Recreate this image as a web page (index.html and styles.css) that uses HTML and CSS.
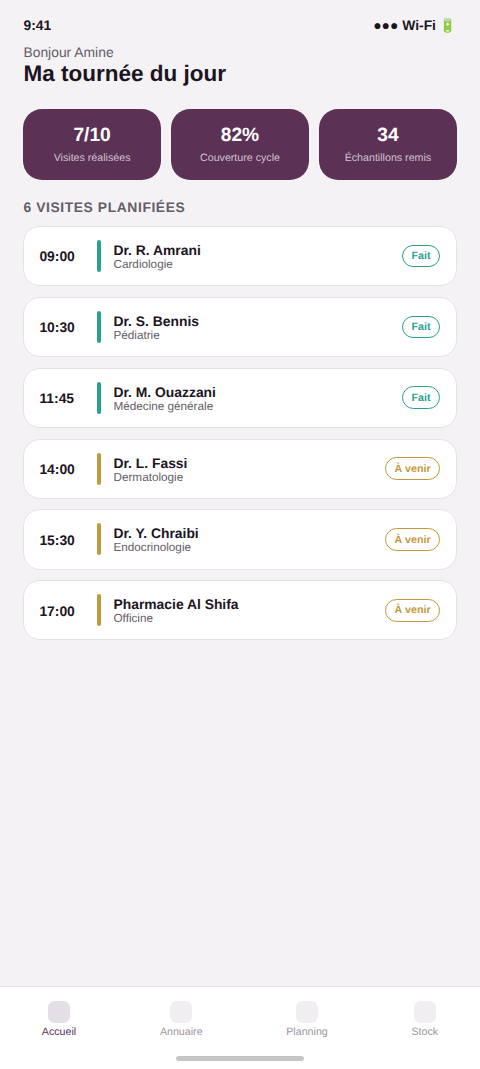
FILE: index.html
```html
<!DOCTYPE html>
<html lang="fr">
<head>
<meta charset="utf-8">
<title>Ma tournée du jour</title>
<link rel="stylesheet" href="styles.css">
</head>
<body>
<div class="screen">
  <div class="status"><span>9:41</span><span>●●● Wi-Fi 🔋</span></div>
  <header class="header">
    <div class="greeting">Bonjour Amine</div>
    <h1 class="title">Ma tournée du jour</h1>
  </header>
  <main class="content">
    <section class="stats">
      <div class="stat"><div class="stat-value">7/10</div><div class="stat-label">Visites réalisées</div></div>
      <div class="stat"><div class="stat-value">82%</div><div class="stat-label">Couverture cycle</div></div>
      <div class="stat"><div class="stat-value">34</div><div class="stat-label">Échantillons remis</div></div>
    </section>
    <h2 class="section-title">6 VISITES PLANIFIÉES</h2>
    <section class="visits">
      <article class="visit done"><time class="time">09:00</time><i class="bar"></i><div class="info"><div class="name">Dr. R. Amrani</div><div class="role">Cardiologie</div></div><span class="pill">Fait</span></article>
      <article class="visit done"><time class="time">10:30</time><i class="bar"></i><div class="info"><div class="name">Dr. S. Bennis</div><div class="role">Pédiatrie</div></div><span class="pill">Fait</span></article>
      <article class="visit done"><time class="time">11:45</time><i class="bar"></i><div class="info"><div class="name">Dr. M. Ouazzani</div><div class="role">Médecine générale</div></div><span class="pill">Fait</span></article>
      <article class="visit next"><time class="time">14:00</time><i class="bar"></i><div class="info"><div class="name">Dr. L. Fassi</div><div class="role">Dermatologie</div></div><span class="pill">À venir</span></article>
      <article class="visit next"><time class="time">15:30</time><i class="bar"></i><div class="info"><div class="name">Dr. Y. Chraibi</div><div class="role">Endocrinologie</div></div><span class="pill">À venir</span></article>
      <article class="visit next"><time class="time">17:00</time><i class="bar"></i><div class="info"><div class="name">Pharmacie Al Shifa</div><div class="role">Officine</div></div><span class="pill">À venir</span></article>
    </section>
  </main>
  <nav class="tabs">
    <div class="tab active"><i class="tab-icon"></i><span>Accueil</span></div>
    <div class="tab"><i class="tab-icon"></i><span>Annuaire</span></div>
    <div class="tab"><i class="tab-icon"></i><span>Planning</span></div>
    <div class="tab"><i class="tab-icon"></i><span>Stock</span></div>
    <div class="home"></div>
  </nav>
</div>
</body>
</html>
```
FILE: styles.css
```css
* { box-sizing: border-box; margin: 0; }
/* 1rem = 10 units of a 450-unit wide layout */
html { font-size: 10.6667px; }
body { background: #f5f2f6; color: #1c151f; font-family: "Liberation Sans", Arial, sans-serif; text-rendering: geometricPrecision; }
.screen { height: 1069px; display: flex; flex-direction: column; overflow: hidden; }
.status { display: flex; justify-content: space-between; padding: 17px 2.15rem 0 2.2rem; height: 44px; font-size: 1.3rem; line-height: 16px; font-weight: 700; }
.header { padding: 0 2.2rem; }
.greeting { font-size: 1.3rem; line-height: 16px; color: #645d67; }
.title { padding-top: 1px; font-size: 22.5px; line-height: 26px; }
.content { flex: 1; padding: 22.4px 2.2rem 0; }
.stats { display: grid; grid-template-columns: repeat(3, 1fr); gap: 1rem; }
.stat { height: 70.6px; padding-top: 16px; border-radius: 1.8rem; background: #5b3156; color: #fff; text-align: center; }
.stat-value { font-size: 1.8rem; line-height: 22px; font-weight: 700; }
.stat-label { margin-top: 5px; font-size: 1rem; line-height: 12px; color: #d0c2ce; }
.section-title { margin-top: 19.4px; font-size: 1.3rem; line-height: 16px; letter-spacing: 0.055rem; color: #645d67; }
.visits { display: grid; gap: 10.67px; margin-top: 10.6px; }
.visit { height: 60.2px; display: flex; align-items: center; padding: 0 1.45rem 0 1.4rem; border: 1px solid #e6e1e8; border-radius: 1.6rem; background: #fff; }
.time { width: 4.2rem; margin-right: 1.2rem; padding-top: 0.5px; font-size: 1.3rem; font-weight: 700; }
.bar { width: 0.35rem; height: 3rem; margin-right: 1.2rem; border-radius: 2px; background: currentColor; }
.info { flex: 1; padding-top: 1px; }
.name { font-size: 1.3rem; line-height: 15px; font-weight: 700; }
.role { margin: 0 0 -1px; font-size: 1.1rem; line-height: 13px; color: #645d67; }
.pill { height: 22.8px; padding: 4.6px 0.8rem 0; border: 1.2px solid; border-radius: 12px; font-size: 1rem; line-height: 12px; font-weight: 700; }
.done .bar, .done .pill { color: #2aa093; }
.next .bar, .next .pill { color: #c4983c; }
.tabs { position: relative; height: 83.5px; display: flex; justify-content: space-around; padding-top: 14.5px; border-top: 1px solid #e6e1e8; background: #fff; }
.tab { display: flex; flex-direction: column; align-items: center; gap: 3px; font-size: 1rem; line-height: 12px; color: #9c959e; }
.tab-icon { width: 22px; height: 22px; border-radius: 6.5px; background: #f0eef1; }
.active { color: #5b3156; }
.active .tab-icon { background: #e4dfe6; }
.home { position: absolute; left: 50%; bottom: 8.5px; width: 128px; height: 4.5px; margin-left: -64px; border-radius: 3px; background: #c6c5c7; }
```
